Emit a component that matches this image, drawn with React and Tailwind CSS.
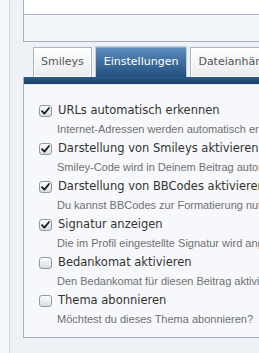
import React from "react";

// Einträge der Einstellungen-Liste
const options = [
  { label: "URLs automatisch erkennen", desc: "Internet-Adressen werden automatisch erkannt und verlinkt.", checked: true },
  { label: "Darstellung von Smileys aktivieren", desc: "Smiley-Code wird in Deinem Beitrag automatisch als Grafik dargestellt.", checked: true },
  { label: "Darstellung von BBCodes aktivieren", desc: "Du kannst BBCodes zur Formatierung nutzen.", checked: true },
  { label: "Signatur anzeigen", desc: "Die im Profil eingestellte Signatur wird angezeigt.", checked: true },
  { label: "Bedankomat aktivieren", desc: "Den Bedankomat für diesen Beitrag aktivieren.", checked: false },
  { label: "Thema abonnieren", desc: "Möchtest du dieses Thema abonnieren?", checked: false },
];

function Checkbox({ checked }) {
  return (
    <span className="w-[13px] h-[12px] shrink-0 rounded-[3px] border border-[#8e99a5] bg-gradient-to-b from-[#fefefe] to-[#dadde1] flex items-center justify-center">
      {checked && (
        <svg width="11" height="10" viewBox="0 0 11 10">
          <path d="M2 5.2 L4.4 7.6 L9 2" fill="none" stroke="#1b1b1b" strokeWidth="1.8" strokeLinecap="round" strokeLinejoin="round" />
        </svg>
      )}
    </span>
  );
}

function Tab({ children, active }) {
  if (active) {
    return (
      <div className="h-[31px] px-[8px] flex items-center border border-b-0 border-[#c3ccd6] bg-gradient-to-b from-[#5d8fbf] to-[#23507f] text-white shadow-[inset_0_1px_0_#87acd0]">
        {children}
      </div>
    );
  }
  return (
    <div className="h-[30px] px-[7px] flex items-center border border-b-0 border-[#a9b5c2] bg-gradient-to-b from-white to-[#e8ebee] text-[#555] shadow-[inset_0_0_0_1px_#fff]">
      {children}
    </div>
  );
}

export default function App() {
  return (
    <div className="w-[259px] h-[353px] overflow-hidden flex bg-[#eef2f7] font-['DejaVu_Sans',sans-serif]">
      <div className="w-[10px] shrink-0 bg-[#f6f8fb] border-r border-[#d2dae3]" />
      <div className="flex-1 pl-[13px] overflow-hidden">
        <div className="w-[320px]">
          {/* Editor-Rahmen oben */}
          <div className="border-l border-b border-[#a3afbc]">
            <div className="h-[15px] bg-white border-b border-[#a9b4c0]" />
            <div className="h-[26px] bg-[#f2f5f9]" />
          </div>

          {/* Tabs */}
          <div className="mt-[4px] pl-[10px] flex items-end gap-[3px] text-[11px] whitespace-nowrap">
            <Tab>Smileys</Tab>
            <Tab active>Einstellungen</Tab>
            <Tab>Dateianhänge</Tab>
          </div>

          {/* Panel */}
          <div className="border-l border-b border-[#a3afbc] bg-[#f6f8fb]">
            <div className="h-[8px] bg-gradient-to-b from-[#2b5b8b] to-[#193e65] border-b border-[#e3e9f0]" />
            <div className="pl-[15px] pt-[16px] pb-[8px] flex flex-col gap-[0px] whitespace-nowrap">
              {options.map((o) => (
                <div key={o.label} className="h-[38px]">
                  <div className="h-[19px] flex items-center gap-[6px]">
                    <Checkbox checked={o.checked} />
                    <span className="text-[11.5px] text-[#333]">{o.label}</span>
                  </div>
                  <div className="h-[19px] flex items-center pl-[18px] text-[11px] text-[#707070] font-['Liberation_Sans',sans-serif]">
                    {o.desc}
                  </div>
                </div>
              ))}
            </div>
          </div>
        </div>
      </div>
    </div>
  );
}
